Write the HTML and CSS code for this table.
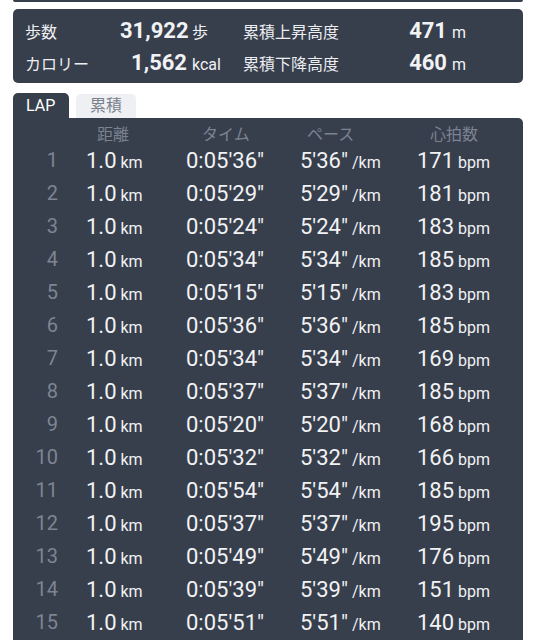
FILE: index.html
```html
<!DOCTYPE html>
<html lang="ja">
<head>
<meta charset="utf-8">
<link rel="stylesheet" href="styles.css">
</head>
<body>
<div class="page">
  <div class="prev-card"></div>
  <div class="stats">
    <div class="stat-row">
      <span class="lbl lbl1">歩数</span>
      <span class="num num1">31,922</span><span class="unit unit1">歩</span>
      <span class="lbl lbl2">累積上昇高度</span>
      <span class="num num2">471</span><span class="unit">m</span>
    </div>
    <div class="stat-row">
      <span class="lbl lbl1">カロリー</span>
      <span class="num num1">1,562</span><span class="unit unit1">kcal</span>
      <span class="lbl lbl2">累積下降高度</span>
      <span class="num num2">460</span><span class="unit">m</span>
    </div>
  </div>
  <div class="tabs">
    <div class="tab active">LAP</div>
    <div class="tab">累積</div>
  </div>
  <div class="table">
    <div class="row head">
      <span></span>
      <span class="h h-dist">距離</span>
      <span class="h h-time">タイム</span>
      <span class="h h-pace">ペース</span>
      <span class="h h-hr">心拍数</span>
    </div>
    <div class="row"><span class="lap">1</span><span>1.0<small> km</small></span><span>0:05'36"</span><span>5'36"<small> /km</small></span><span>171<small> bpm</small></span></div>
    <div class="row"><span class="lap">2</span><span>1.0<small> km</small></span><span>0:05'29"</span><span>5'29"<small> /km</small></span><span>181<small> bpm</small></span></div>
    <div class="row"><span class="lap">3</span><span>1.0<small> km</small></span><span>0:05'24"</span><span>5'24"<small> /km</small></span><span>183<small> bpm</small></span></div>
    <div class="row"><span class="lap">4</span><span>1.0<small> km</small></span><span>0:05'34"</span><span>5'34"<small> /km</small></span><span>185<small> bpm</small></span></div>
    <div class="row"><span class="lap">5</span><span>1.0<small> km</small></span><span>0:05'15"</span><span>5'15"<small> /km</small></span><span>183<small> bpm</small></span></div>
    <div class="row"><span class="lap">6</span><span>1.0<small> km</small></span><span>0:05'36"</span><span>5'36"<small> /km</small></span><span>185<small> bpm</small></span></div>
    <div class="row"><span class="lap">7</span><span>1.0<small> km</small></span><span>0:05'34"</span><span>5'34"<small> /km</small></span><span>169<small> bpm</small></span></div>
    <div class="row"><span class="lap">8</span><span>1.0<small> km</small></span><span>0:05'37"</span><span>5'37"<small> /km</small></span><span>185<small> bpm</small></span></div>
    <div class="row"><span class="lap">9</span><span>1.0<small> km</small></span><span>0:05'20"</span><span>5'20"<small> /km</small></span><span>168<small> bpm</small></span></div>
    <div class="row"><span class="lap">10</span><span>1.0<small> km</small></span><span>0:05'32"</span><span>5'32"<small> /km</small></span><span>166<small> bpm</small></span></div>
    <div class="row"><span class="lap">11</span><span>1.0<small> km</small></span><span>0:05'54"</span><span>5'54"<small> /km</small></span><span>185<small> bpm</small></span></div>
    <div class="row"><span class="lap">12</span><span>1.0<small> km</small></span><span>0:05'37"</span><span>5'37"<small> /km</small></span><span>195<small> bpm</small></span></div>
    <div class="row"><span class="lap">13</span><span>1.0<small> km</small></span><span>0:05'49"</span><span>5'49"<small> /km</small></span><span>176<small> bpm</small></span></div>
    <div class="row"><span class="lap">14</span><span>1.0<small> km</small></span><span>0:05'39"</span><span>5'39"<small> /km</small></span><span>151<small> bpm</small></span></div>
    <div class="row"><span class="lap">15</span><span>1.0<small> km</small></span><span>0:05'51"</span><span>5'51"<small> /km</small></span><span>140<small> bpm</small></span></div>
  </div>
</div>
</body>
</html>
```

FILE: styles.css
```css
html, body {
  margin: 0;
  padding: 0;
  background: #ffffff;
  height: 640px;
  overflow: hidden;
}

body {
  font-family: Roboto, "Noto Sans CJK JP", sans-serif;
  color: #f1f2f4;
}

.page {
  width: 510px;
  padding-left: 13px;
}

.prev-card {
  height: 2px;
  background: #373e4c;
  border-radius: 0 0 4px 4px;
}

.stats {
  margin-top: 7px;
  height: 74px;
  box-sizing: border-box;
  padding: 6px 0 0 12px;
  background: #373e4c;
  border-radius: 5px;
}

.stat-row {
  display: flex;
  align-items: baseline;
  height: 32px;
  line-height: 32px;
}

.lbl {
  font-size: 16px;
  color: #eceef1;
}

.lbl1 { width: 95px; }
.lbl2 { width: 110px; }

.num {
  font-size: 22px;
  font-weight: 700;
  text-align: right;
}

.num1 { width: 67px; }
.num2 { width: 94px; }

.unit {
  font-size: 16px;
  margin-left: 5px;
}

.unit1 { width: 51px; }

.tabs {
  display: flex;
  align-items: flex-end;
  gap: 7px;
  margin-top: 10px;
  height: 25px;
}

.tab {
  font-size: 16px;
  border-radius: 5px 5px 0 0;
  box-sizing: border-box;
}

.tab.active {
  width: 56px;
  height: 25px;
  line-height: 25px;
  padding-left: 13px;
  background: #373e4c;
  color: #ffffff;
}

.tab:not(.active) {
  width: 60px;
  height: 24px;
  line-height: 24px;
  text-align: center;
  background: #eef0f3;
  color: #7a808c;
}

.table {
  background: #373e4c;
  border-radius: 0 5px 0 0;
  padding-top: 7px;
  min-height: 540px;
}

.row {
  display: grid;
  grid-template-columns: 49px 124px 114px 117px 1fr;
  height: 33px;
  line-height: 33px;
  font-size: 22px;
  white-space: nowrap;
}

.row > span:nth-child(2) { padding-left: 24px; }

.row small {
  font-size: 16px;
}

.lap {
  font-size: 20px;
  color: #7d8593;
  text-align: right;
  padding-right: 4px;
}

.row.head {
  height: 19px;
  line-height: 19px;
  font-size: 16px;
  color: #7b8391;
}

.row.head > span.h-dist { padding-left: 35px; }
.h-time { padding-left: 16px; }
.h-pace { padding-left: 7px; }
.h-hr { padding-left: 13px; }
```
